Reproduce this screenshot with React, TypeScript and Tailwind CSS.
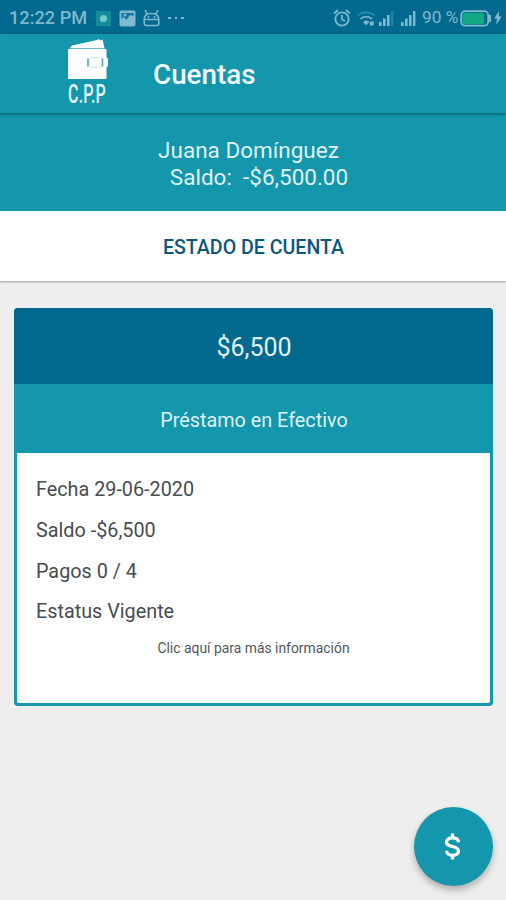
import React from 'react';

interface Account {
  amount: string;
  type: string;
  details: { label: string; value: string }[];
}

const account: Account = {
  amount: '$6,500',
  type: 'Préstamo en Efectivo',
  details: [
    { label: 'Fecha', value: '29-06-2020' },
    { label: 'Saldo', value: '-$6,500' },
    { label: 'Pagos', value: '0 / 4' },
    { label: 'Estatus', value: 'Vigente' },
  ],
};

const SignalIcon: React.FC<{ weak?: boolean }> = ({ weak }) => (
  <svg className="h-[17px] w-[16px]" viewBox="0 0 16 17" fill="currentColor">
    <rect x="1" y="12" width="2.6" height="4" />
    <rect x="5" y="8.5" width="2.6" height="7.5" />
    <rect x="9" y="5" width="2.6" height="11" />
    <rect x="13" y="1" width="2.4" height="15" opacity={weak ? 0.3 : 1} />
  </svg>
);

const StatusBar: React.FC = () => (
  <div className="flex h-[34px] items-center bg-[#00698d] pl-[9px] pr-[3px] pt-0.5 text-[#7fb9cf]">
    <span className="w-[79px] whitespace-nowrap text-[18.2px] font-medium leading-none">12:22 PM</span>
    <div className="ml-[8px] flex h-[15px] w-[15px] items-center justify-center bg-[#148c99]">
      <div className="h-[7px] w-[7px] rounded-full bg-[#75c9cb]" />
    </div>
    {/* Imagen */}
    <svg className="ml-[8px] h-[17px] w-[17px]" viewBox="0 0 17 17">
      <rect x="0.5" y="0.5" width="16" height="16" rx="2" fill="currentColor" />
      <path d="M2.500 3h12v3L11 5 7.500 10 5 7l-2.500 2z" fill="#12759a" />
      <circle cx="6" cy="5" r="1.500" fill="currentColor" />
    </svg>
    {/* Android */}
    <svg className="ml-[6px] h-[18px] w-[19px]" viewBox="0 0 19 18" fill="none" stroke="currentColor" strokeWidth="1.6">
      <path d="M2.200 9.500v5a2 2 0 0 0 2 2h10.600a2 2 0 0 0 2-2v-5M2.200 10c.2-3.600 3-5.500 7.300-5.500s7.100 1.900 7.300 5.500M5.300 5.300 3.200 1.200M13.700 5.300 15.800 1.200M2.200 10.500h14.600" />
      <circle cx="6.500" cy="8" r="1" fill="currentColor" stroke="none" />
      <circle cx="12.500" cy="8" r="1" fill="currentColor" stroke="none" />
    </svg>
    <div className="ml-[7px] flex gap-[4px]">
      <i className="h-[2.500px] w-[2.500px] bg-current" />
      <i className="h-[2.500px] w-[2.500px] bg-current" />
      <i className="h-[2.500px] w-[2.500px] bg-current" />
    </div>

    <div className="ml-auto flex items-center">
      {/* Alarma */}
      <svg className="h-[18px] w-[18px]" viewBox="0 0 18 18" fill="none" stroke="currentColor" strokeWidth="1.8">
        <circle cx="9" cy="10" r="6.700" />
        <path d="M9 6v4.500l3 1.500M1 4.500 5 1M17 4.500 13 1" />
      </svg>
      {/* Wifi */}
      <svg className="ml-[6px] h-[17px] w-[19px]" viewBox="0 0 19 17" fill="none" stroke="currentColor" strokeWidth="1.700">
        <path d="M1 5.500c4.500-4.300 12-4.300 16.500 0" opacity="0.4" />
        <path d="M3.500 9c3.200-3 8.300-3 11.500 0" />
        <path d="M6.300 12c1.700-1.500 4.200-1.500 5.800 0L9.300 15z" fill="currentColor" strokeWidth="0.600" />
        <circle cx="14.800" cy="13.500" r="2.200" fill="currentColor" stroke="none" />
      </svg>
      <div className="ml-[2px]"><SignalIcon weak /></div>
      <div className="ml-[6px]"><SignalIcon /></div>
      <span className="ml-[6px] w-[38px] whitespace-nowrap text-[17.300px] leading-none">90 %</span>
      {/* Batería */}
      <svg className="h-[17px] w-[32px]" viewBox="0 0 32 17">
        <rect x="1.200" y="1.200" width="27" height="14.500" rx="4" fill="none" stroke="currentColor" strokeWidth="1.800" />
        <rect x="2.500" y="2.800" width="21.500" height="11.400" rx="2" fill="#12a783" />
        <path d="M29 5h2v7h-2z" fill="currentColor" />
      </svg>
      <svg className="ml-[2px] mr-[1px] h-[14px] w-[8px]" viewBox="0 0 8 15" fill="currentColor">
        <path d="M5 0 0 8h3L2 15l6-9H5z" />
      </svg>
    </div>
  </div>
);

const Logo: React.FC = () => (
  <div className="flex w-[42px] flex-col items-center">
    <svg className="h-[40px] w-[42px]" viewBox="0 0 42 40">
      <path d="M3 9 5 6.500 30 1l2-1 1.500 1.500 2-1L37.500 9z" fill="white" />
      <path d="M3 9.500h35" stroke="#8cccd5" strokeWidth="0.700" />
      <rect x="1" y="10" width="38.500" height="30" rx="0.800" fill="white" />
      <rect x="20.500" y="18" width="20.500" height="10.500" rx="3" fill="white" />
      <path d="M21 19.500v8M35.500 19.500v8" stroke="#55aebb" strokeWidth="1.700" />
      <path d="M23 18.700h12M23 28.200h12" stroke="#b8dde2" strokeWidth="0.800" />
    </svg>
    <span className="mt-[3px] block origin-center scale-x-[0.640] whitespace-nowrap pr-[2px] text-[25px] font-medium leading-[25px] tracking-[0.300px] text-[#e6f6f8]">
      C.P.P
    </span>
  </div>
);

const AccountCard: React.FC<{ account: Account }> = ({ account }) => (
  <div className="ml-[14px] mr-[13px] mt-[27px] h-[398px] overflow-hidden rounded-[4px] bg-[#1496ac]">
    <div className="flex h-[76px] items-center justify-center bg-[#00698d] pl-px pt-[4px] text-[25px] text-[#e2f1f6]">
      {account.amount}
    </div>
    <div className="flex h-[69px] items-center justify-center pl-px pt-[4px] text-[19.800px] text-[#dff2f5]">
      {account.type}
    </div>
    <div className="mx-[3px] h-[250px] rounded-b-[2px] bg-white px-[19px] pt-[15px]">
      {account.details.map((detail) => (
        <p key={detail.label} className="h-[40.800px] text-[19.800px] leading-[43px] text-[#454d50]">
          {detail.label} {detail.value}
        </p>
      ))}
      <p className="mt-[7px] text-center text-[13.900px] leading-[20px] text-[#50585b]">
        Clic aquí para más información
      </p>
    </div>
  </div>
);

export default function App() {
  return (
    <div className="relative flex h-[900px] w-[506px] flex-col overflow-hidden bg-[#eeeeee] font-['Roboto',sans-serif]">
      <StatusBar />

      <header className="z-10 flex h-[79px] items-start bg-[#1496ac] pl-[67px] pt-[5px] shadow-[0_1px_3px_rgba(0,0,0,0.450)]">
        <Logo />
        <h1 className="ml-[44px] mt-[17px] text-[27.800px] font-medium leading-[38px] text-[#f2fbfc]">Cuentas</h1>
      </header>

      <section className="h-[98px] bg-[#1496ac] pt-[24px] text-center text-[22.500px] leading-[27px] text-[#dff3f6]">
        <p className="pr-[9px]">Juana Domínguez</p>
        <p className="whitespace-pre pl-[12px]">Saldo:  -$6,500.00</p>
      </section>

      <button className="z-10 flex h-[70px] shrink-0 items-center justify-center bg-white pl-[1px] pt-[4px] text-[19.600px] font-medium text-[#0b587a] shadow-[0_1px_2px_rgba(0,0,0,0.350)]">
        ESTADO DE CUENTA
      </button>

      <AccountCard account={account} />

      {/* Botón flotante */}
      <button className="absolute bottom-[14px] right-[13px] flex h-[79px] w-[79px] items-center justify-center rounded-full bg-[#1496ac] text-white shadow-[0_4px_7px_rgba(0,0,0,0.280)]">
        <svg className="mr-[2px] h-[27px] w-[17px]" viewBox="0 0 17 27" fill="none" stroke="currentColor" strokeWidth="3.300">
          <path d="M14.500 9.300C14.500 6.300 12 4.900 8.500 4.900S2.500 6.500 2.500 9.200c0 2.800 2.600 3.500 6 4.300s6 1.700 6 4.600c0 2.600-2.500 4.200-6 4.200S2.500 20.500 2.500 17.700M8.500 .500v4M8.500 22v4.500" />
        </svg>
      </button>
    </div>
  );
}
